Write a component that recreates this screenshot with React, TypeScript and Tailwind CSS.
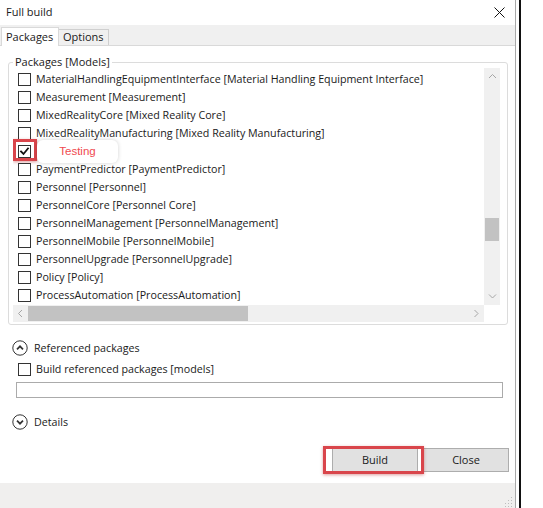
import React from "react";

const items: { label: string; checked?: boolean }[] = [
  { label: "MaterialHandlingEquipmentInterface [Material Handling Equipment Interface]" },
  { label: "Measurement [Measurement]" },
  { label: "MixedRealityCore [Mixed Reality Core]" },
  { label: "MixedRealityManufacturing [Mixed Reality Manufacturing]" },
  { label: "Testing [Testing]", checked: true },
  { label: "PaymentPredictor [PaymentPredictor]" },
  { label: "Personnel [Personnel]" },
  { label: "PersonnelCore [Personnel Core]" },
  { label: "PersonnelManagement [PersonnelManagement]" },
  { label: "PersonnelMobile [PersonnelMobile]" },
  { label: "PersonnelUpgrade [PersonnelUpgrade]" },
  { label: "Policy [Policy]" },
  { label: "ProcessAutomation [ProcessAutomation]" },
];

function CheckBox({ checked }: { checked?: boolean }) {
  return (
    <span className="w-[13px] h-[13px] shrink-0 border border-[#333] bg-white flex items-center justify-center">
      {checked && (
        <svg width="11" height="11" viewBox="0 0 11 11" fill="none" stroke="#111" strokeWidth="1.8" strokeLinecap="square">
          <path d="M2 5.5 L4.5 8 L9 2.5" />
        </svg>
      )}
    </span>
  );
}

function Chevron({ dir }: { dir: "up" | "down" | "left" | "right" }) {
  const d = {
    up: "M1 5 L4.5 1.5 L8 5",
    down: "M1 1.5 L4.5 5 L8 1.5",
    left: "M5 1 L1.5 4.5 L5 8",
    right: "M1.5 1 L5 4.5 L1.5 8",
  }[dir];
  const horiz = dir === "up" || dir === "down";
  return (
    <svg width={horiz ? 9 : 7} height={horiz ? 7 : 9} viewBox={horiz ? "0 0 9 7" : "0 0 7 9"} fill="none" stroke="#a6a6a6" strokeWidth="1">
      <path d={d} />
    </svg>
  );
}

function CircleToggle({ up }: { up?: boolean }) {
  return (
    <svg width="16" height="16" viewBox="0 0 16 16" fill="none" stroke="#333" className="shrink-0">
      <circle cx="8" cy="8" r="7.2" strokeWidth="1" />
      <path d={up ? "M5 9.3 L8 6.3 L11 9.3" : "M5 6.7 L8 9.7 L11 6.7"} strokeWidth="1.7" />
    </svg>
  );
}

export default function App() {
  return (
    <div className="w-[543px] h-[508px] bg-white flex font-['Open_Sans',sans-serif] text-[10.7px] text-[#1a1a1a] overflow-hidden">
      {/* dialog window */}
      <div className="w-[516px] h-full flex flex-col border-r border-[#a9a9a9]">
        {/* title bar */}
        <div className="h-[25px] flex items-center justify-between pl-[6px] pr-[10px] text-[11px]">
          <span>Full build</span>
          <svg width="11" height="11" viewBox="0 0 11 11" stroke="#111" strokeWidth="1">
            <path d="M0.5 0.5 L10.5 10.5 M10.5 0.5 L0.5 10.5" />
          </svg>
        </div>

        {/* tabs */}
        <div className="h-[21px] bg-[#f0f0f0] border-b border-[#d9d9d9] flex items-end pl-px">
          <div className="relative h-[19px] -mb-px pl-[4px] bg-white border border-b-0 border-[#d9d9d9] flex items-center text-[11px] w-[58px]">
            Packages
          </div>
          <div className="h-[16px] w-[50px] border border-b-0 border-l-0 border-[#cfcfcf] flex items-center pl-[4px] text-[11px]">
            Options
          </div>
        </div>

        {/* tab panel */}
        <div className="flex-1 flex flex-col">
          <fieldset className="mt-[9px] ml-[8px] w-[500px] border border-[#dcdcdc] rounded-[3px] pl-[4px] pr-[6px] pb-[2px]">
            <legend className="px-[2px] leading-[14px] text-[11px]">Packages [Models]</legend>
            <div className="-mt-px h-[254px] grid grid-cols-[471px_16px] grid-rows-[237px_17px]">
              {/* items */}
              <div className="pt-[2px] overflow-hidden">
                {items.map((it) => (
                  <div key={it.label} className="relative h-[18px] flex items-center pl-[5px] gap-[5px] whitespace-nowrap">
                    <CheckBox checked={it.checked} />
                    {!it.checked && <span className="leading-[18px]">{it.label}</span>}
                    {it.checked && (
                      <>
                        <span className="absolute left-0 -top-[3px] w-[24px] h-[22px] border-[3px] border-[#d9454b] shadow-[0_1px_3px_rgba(180,40,40,0.45)]" />
                        <span className="absolute left-[24px] -top-[2px] w-[81px] h-[23px] bg-white rounded-[6px] shadow-[0_0_4px_rgba(0,0,0,0.18)] flex items-center justify-center font-['Liberation_Sans',sans-serif] text-[11.5px] text-[#f04a50]">
                          Testing
                        </span>
                      </>
                    )}
                  </div>
                ))}
              </div>

              {/* vertical scrollbar */}
              <div className="bg-[#f0f0f0] flex flex-col">
                <div className="h-[17px] flex items-center justify-center">
                  <Chevron dir="up" />
                </div>
                <div className="h-[133px]" />
                <div className="h-[23px] mx-px bg-[#c2c2c2]" />
                <div className="flex-1" />
                <div className="h-[17px] flex items-center justify-center">
                  <Chevron dir="down" />
                </div>
              </div>

              {/* horizontal scrollbar */}
              <div className="bg-[#f0f0f0] flex items-stretch">
                <div className="w-[15px] flex items-center justify-center">
                  <Chevron dir="left" />
                </div>
                <div className="w-[220px] my-px bg-[#c2c2c2]" />
                <div className="flex-1" />
                <div className="w-[15px] flex items-center justify-center">
                  <Chevron dir="right" />
                </div>
              </div>
              <div className="bg-white" />
            </div>
          </fieldset>

          {/* referenced packages */}
          <div className="mt-[15px] ml-[12px] h-[16px] flex items-center gap-[6px]">
            <CircleToggle up />
            <span>Referenced packages</span>
          </div>
          <div className="mt-[5px] ml-[18px] h-[16px] flex items-center gap-[5px]">
            <CheckBox />
            <span>Build referenced packages [models]</span>
          </div>
          <div className="mt-[5px] ml-[16px] w-[487px] h-[16px] border border-[#ababab] bg-white" />

          {/* details */}
          <div className="mt-[16px] ml-[12px] h-[16px] flex items-center gap-[6px]">
            <CircleToggle />
            <span>Details</span>
          </div>

          {/* buttons */}
          <div className="mt-[18px] pr-[6px] flex justify-end gap-[5px] text-[11px]">
            <div className="relative w-[86px] h-[24px] bg-[#e1e1e1] border border-[#adadad] flex items-center justify-center">
              Build
              <span className="absolute -left-[10px] -top-[3px] w-[101px] h-[28px] border-[3px] border-[#d9454b] shadow-[0_1px_3px_rgba(180,40,40,0.45)]" />
            </div>
            <div className="w-[86px] h-[24px] bg-[#e1e1e1] border border-[#adadad] flex items-center justify-center">
              Close
            </div>
          </div>
        </div>

        {/* status strip */}
        <div className="h-[25px] bg-[#f0efee] flex items-end justify-end pr-[2px] pb-[1px]">
          <svg width="10" height="10" viewBox="0 0 10 10" fill="#bdbdbd">
            <rect x="8" y="0" width="1" height="1" />
            <rect x="8" y="3" width="1" height="1" />
            <rect x="5" y="3" width="1" height="1" />
            <rect x="8" y="6" width="1" height="1" />
            <rect x="5" y="6" width="1" height="1" />
            <rect x="2" y="6" width="1" height="1" />
            <rect x="8" y="9" width="1" height="1" />
            <rect x="5" y="9" width="1" height="1" />
            <rect x="2" y="9" width="1" height="1" />
          </svg>
        </div>
      </div>
      <div className="w-[3px]" />
      <div className="w-[2px] h-full bg-[#111]" />
    </div>
  );
}
